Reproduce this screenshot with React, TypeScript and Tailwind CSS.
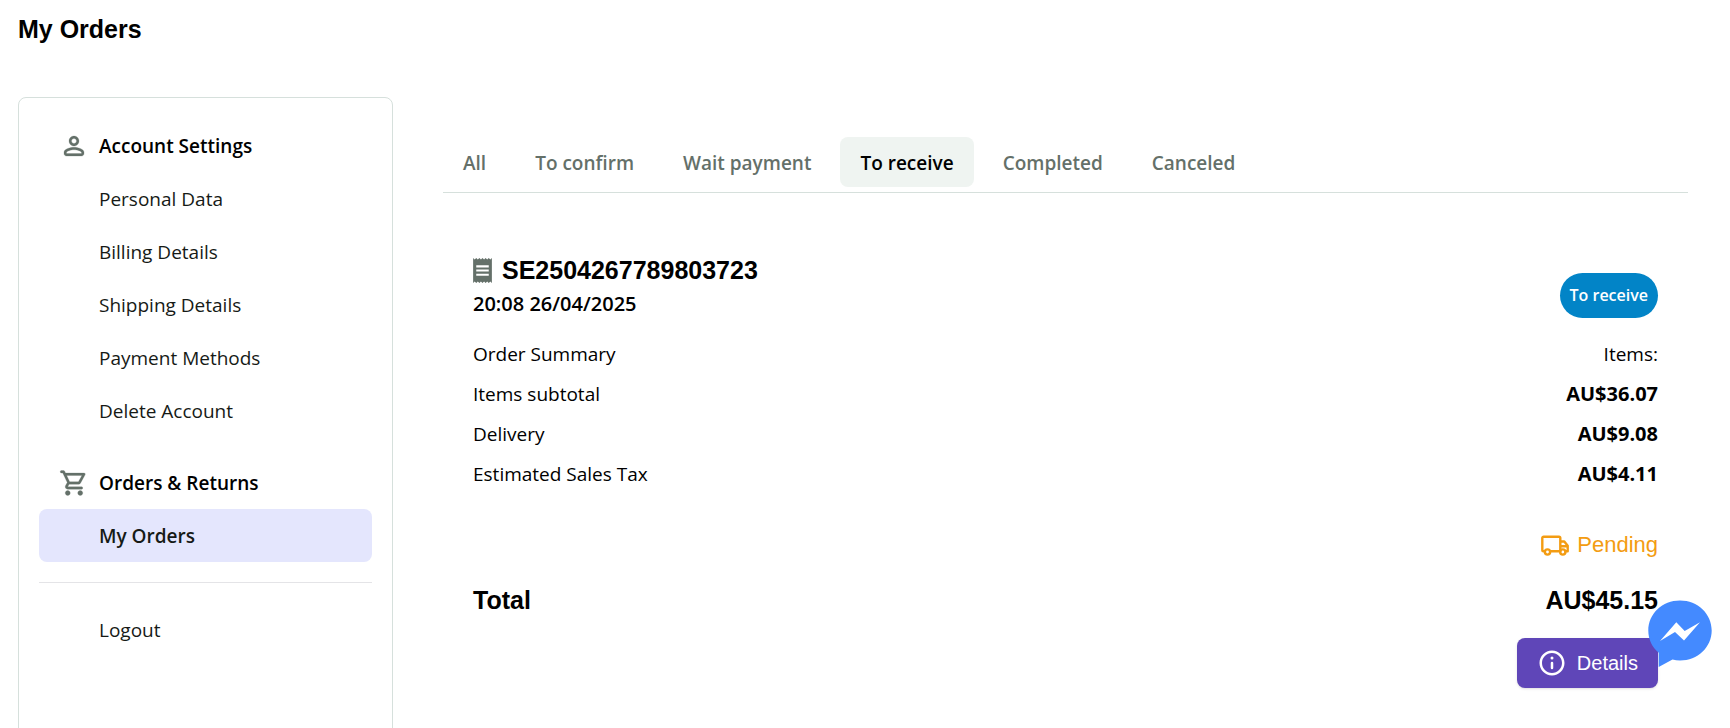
import { ReactNode } from "react";

const ACCOUNT_LINKS = ["Personal Data", "Billing Details", "Shipping Details", "Payment Methods", "Delete Account"];
const TABS = ["All", "To confirm", "Wait payment", "To receive", "Completed", "Canceled"];
const SUMMARY = [
  { label: "Items subtotal", value: "AU$36.07" },
  { label: "Delivery", value: "AU$9.08" },
  { label: "Estimated Sales Tax", value: "AU$4.11" },
];

function Icon({ className, children }: { className: string; children: ReactNode }) {
  return (
    <svg viewBox="0 0 24 24" fill="currentColor" aria-hidden="true" className={`shrink-0 ${className}`}>
      {children}
    </svg>
  );
}

function PersonIcon() {
  return (
    <Icon className="size-[30px] text-[#647069]">
      <path
        d="M12 12c2.21 0 4-1.79 4-4s-1.79-4-4-4-4 1.79-4 4 1.79 4 4 4Zm0-6c1.1 0 2 .9 2 2s-.9 2-2 2-2-.9-2-2 .9-2 2-2Zm0 7c-2.67 0-8 1.34-8 4v1c0 1.1.9 2 2 2h12c1.1 0 2-.9 2-2v-1c0-2.66-5.33-4-8-4Zm6 5H6v-.99c.2-.72 3.3-2.01 6-2.01s5.8 1.29 6 2v1Z"
        stroke="currentColor"
        strokeWidth=".2"
      />
    </Icon>
  );
}

function CartIcon() {
  return (
    <Icon className="size-[30px] text-[#647069]">
      <path
        d="M15.55 13c.75 0 1.41-.41 1.75-1.03l3.58-6.49A.996.996 0 0 0 20.01 4H5.21l-.67-1.43a.993.993 0 0 0-.9-.57H2c-.55 0-1 .45-1 1s.45 1 1 1h1l3.6 7.59-1.35 2.44C4.52 15.37 5.48 17 7 17h11c.55 0 1-.45 1-1s-.45-1-1-1H7l1.1-2h7.45ZM6.16 6h12.15l-2.76 5H8.53L6.16 6ZM7 18c-1.1 0-1.99.9-1.99 2S5.9 22 7 22s2-.9 2-2-.9-2-2-2Zm10 0c-1.1 0-1.99.9-1.99 2s.89 2 1.99 2 2-.9 2-2-.9-2-2-2Z"
        stroke="currentColor"
        strokeWidth=".2"
      />
    </Icon>
  );
}

function SidebarHeading({ icon, children }: { icon: ReactNode; children: ReactNode }) {
  return (
    <h2 className="flex h-[52px] items-center gap-[10px] px-5 text-[19px] leading-[29px] font-semibold text-black">
      {icon}
      {children}
    </h2>
  );
}

function SidebarLink({ active = false, children }: { active?: boolean; children: ReactNode }) {
  return (
    <a
      href="#"
      aria-current={active ? "page" : undefined}
      className={`block rounded-lg pt-[13px] pr-5 pb-[11px] pl-[60px] text-[19px] leading-[29px] text-[#161a16] ${
        active ? "bg-[#e4e6fd] font-semibold" : ""
      }`}
    >
      {children}
    </a>
  );
}

export default function App() {
  return (
    <div className="min-h-screen bg-white px-[18px] pt-[11px] font-['Open_Sans','Noto_Sans',sans-serif] text-black">
      <h1 className="font-['Liberation_Sans',Arial,sans-serif] text-[25px] leading-9 font-bold">My Orders</h1>

      <div className="mt-[50px] flex gap-[50px] pr-6">
        <aside className="w-[375px] shrink-0 rounded-lg border border-[#d6e0dc] px-5 pt-[22px] pb-[100px]">
          <nav aria-label="Account">
            <SidebarHeading icon={<PersonIcon />}>Account Settings</SidebarHeading>
            {ACCOUNT_LINKS.map((label) => (
              <SidebarLink key={label}>{label}</SidebarLink>
            ))}
            <div className="mt-5">
              <SidebarHeading icon={<CartIcon />}>Orders &amp; Returns</SidebarHeading>
              <SidebarLink active>My Orders</SidebarLink>
            </div>
            <hr className="my-5 border-[#e4e4e7]" />
            <SidebarLink>Logout</SidebarLink>
          </nav>
        </aside>

        <main className="min-w-0 flex-1 pt-10">
          <div role="tablist" className="flex gap-[9px] border-b border-[#d6e0dc] pb-[5px]">
            {TABS.map((tab) => (
              <button
                key={tab}
                type="button"
                role="tab"
                aria-selected={tab === "To receive"}
                className={`h-[50px] rounded-lg px-5 pt-[2px] text-[19px] leading-[30px] font-semibold whitespace-nowrap ${
                  tab === "To receive" ? "bg-[#eff4f1] text-black" : "text-[#647069]"
                }`}
              >
                {tab}
              </button>
            ))}
          </div>

          <section className="px-[30px] pt-[59px] text-[19px] leading-[30px]">
            <div className="flex items-center justify-between">
              <div>
                <h3 className="mb-px flex items-center gap-[10px] font-['Liberation_Sans',Arial,sans-serif] text-[25px] leading-9 font-bold">
                  <svg viewBox="3 0 18 24" fill="currentColor" aria-hidden="true" className="h-[25px] w-[19px] text-[#647069]">
                    <path d="M18 17H6v-2h12v2Zm0-4H6v-2h12v2Zm0-4H6V7h12v2ZM3 24l1.5-1.5L6 24l1.5-1.5L9 24l1.5-1.5L12 24l1.5-1.5L15 24l1.5-1.5L18 24l1.5-1.5L21 24V0l-1.5 1.5L18 0l-1.5 1.5L15 0l-1.5 1.5L12 0l-1.5 1.5L9 0 7.5 1.5 6 0 4.5 1.5 3 0v24Z" />
                  </svg>
                  SE2504267789803723
                </h3>
                <p className="text-[20px] font-semibold">20:08 26/04/2025</p>
              </div>
              <span className="mt-5 rounded-full bg-[#0284c7] px-[10px] py-2 text-[16px] leading-[29px] font-semibold text-white">
                To receive
              </span>
            </div>

            <dl className="mt-5 space-y-[10px]">
              <div className="flex justify-between">
                <dt>Order Summary</dt>
                <dd>Items:</dd>
              </div>
              {SUMMARY.map(({ label, value }) => (
                <div key={label} className="flex justify-between">
                  <dt>{label}</dt>
                  <dd className="text-[20px] font-bold">{value}</dd>
                </div>
              ))}
            </dl>

            <p className="mt-[38px] flex items-center justify-end gap-2 font-['Liberation_Sans',Arial,sans-serif] text-[22px] leading-9 text-[#f39c12]">
              <svg viewBox="0 0 28 21" fill="none" stroke="currentColor" strokeWidth="2.4" strokeLinejoin="round" aria-hidden="true" className="h-[21px] w-7">
                <path d="M3.6 16.3H2.6A1.3 1.3 0 0 1 1.3 15V3A1.3 1.3 0 0 1 2.6 1.7H18A1.3 1.3 0 0 1 19.3 3V16.3H9.5M19.3 6.5H23.3L26.7 10.8V16.3H25M19.3 11.2H26.7" />
                <circle cx="6.5" cy="17" r="2.6" />
                <circle cx="21.8" cy="17" r="2.6" />
              </svg>
              Pending
            </p>

            <div className="mt-[19px] flex justify-between font-['Liberation_Sans',Arial,sans-serif] text-[25px] leading-9 font-bold">
              <span>Total</span>
              <span>AU$45.15</span>
            </div>

            <div className="mt-5 flex justify-end">
              <button
                type="button"
                className="flex h-[50px] items-center gap-[10px] rounded-lg bg-[#5f46b8] px-5 font-['Liberation_Sans',Arial,sans-serif] text-[20px] text-white shadow-sm"
              >
                <Icon className="size-[30px]">
                  <path d="M12 2C6.48 2 2 6.48 2 12s4.48 10 10 10 10-4.48 10-10S17.52 2 12 2Zm0 18c-4.42 0-8-3.58-8-8s3.58-8 8-8 8 3.58 8 8-3.58 8-8 8Z" />
                  <rect x="11" y="11" width="2" height="6" rx="1" />
                  <circle cx="12" cy="8" r="1.2" />
                </Icon>
                Details
              </button>
            </div>
          </section>
        </main>
      </div>

      <button type="button" aria-label="Open Messenger chat" className="fixed right-[18px] bottom-[60px]">
        <svg viewBox="0 0 64 68" aria-hidden="true" className="h-[68px] w-16">
          <path d="M32 .5C14.3.5.3 13.8.3 30.5c0 9 3.9 16.7 10.4 22.2V67l13.8-7.5c2.4.7 4.9 1 7.5 1 17.7 0 31.700-13.3 31.700-30S49.7.5 32 .5Z" fill="#448aff" />
          <path d="M12 41 28.3 22.3 36.7 31 52 22.3 36 40.5 27 32Z" fill="#fff" />
        </svg>
      </button>
    </div>
  );
}
